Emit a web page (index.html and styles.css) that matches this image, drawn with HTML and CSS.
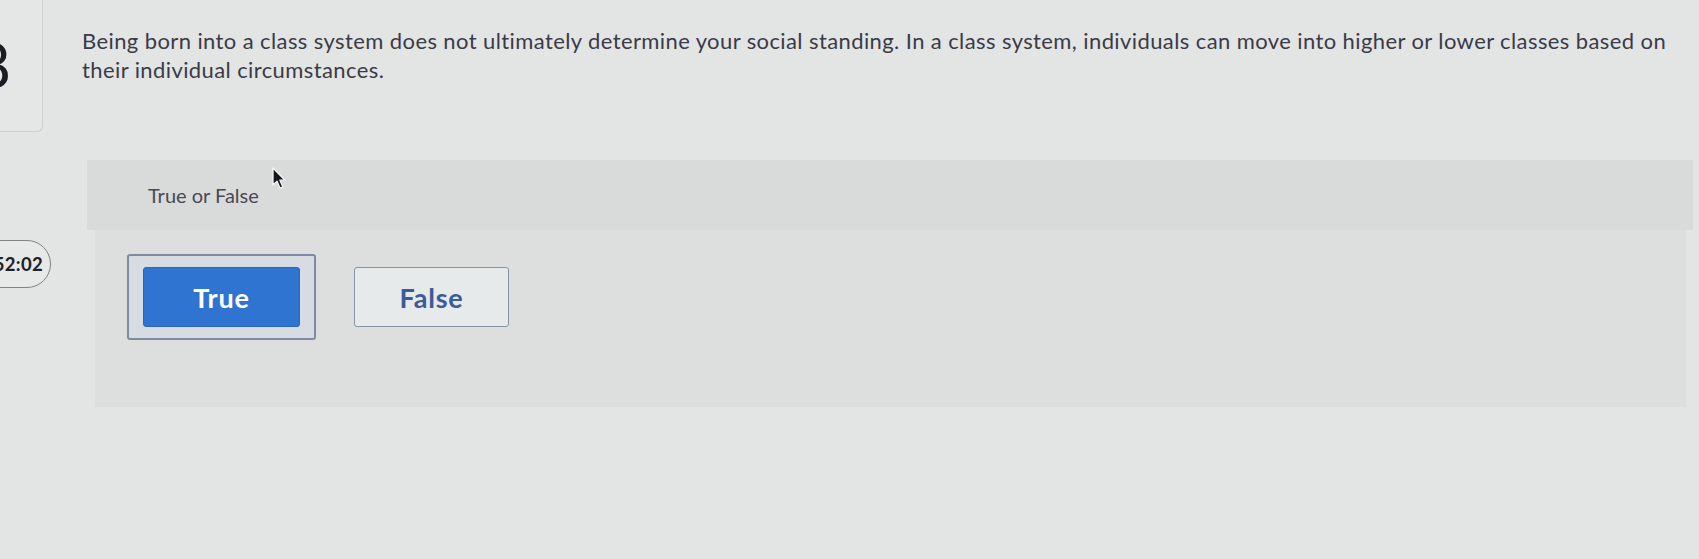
FILE: index.html
```html
<!DOCTYPE html>
<html lang="en">
<head>
<meta charset="utf-8">
<title>True or False</title>
<link rel="stylesheet" href="styles.css">
</head>
<body>
<div class="page">
  <aside class="rail">
    <div class="num-card"><span class="num">8</span></div>
    <div class="timer">52:02</div>
  </aside>
  <main class="main">
    <p class="prompt">Being born into a class system does not ultimately determine your social standing. In a class system, individuals can move into higher or lower classes based on<br>their individual circumstances.</p>
    <section class="panel">
      <div class="panel-head">True or False</div>
      <div class="panel-body">
        <div class="choice-frame"><button class="choice choice-selected">True</button></div>
        <button class="choice">False</button>
      </div>
    </section>
  </main>
  <svg class="cursor" width="16" height="24" viewBox="0 0 16 24" aria-hidden="true">
    <path d="M1 1 L1 18 L5 14.2 L8 21 L10.8 19.8 L7.9 13.2 L13 13.2 Z" fill="#16161c" stroke="#f4f6f6" stroke-width="1.3" stroke-linejoin="round"/>
  </svg>
</div>
</body>
</html>
```

FILE: styles.css
```css
* { box-sizing: border-box; }

html, body {
  margin: 0;
  padding: 0;
}

body {
  width: 1699px;
  height: 559px;
  overflow: hidden;
  background: #e2e5e4;
  font-family: Lato, "Open Sans", "Liberation Sans", sans-serif;
  color: #3b3a47;
}

.page {
  position: relative;
  display: flex;
  width: 1699px;
  height: 559px;
}

.rail {
  width: 52px;
  flex: none;
  display: flex;
  flex-direction: column;
}

.num-card {
  width: 60px;
  height: 132px;
  margin-left: -17px;
  padding-top: 33px;
  border: 1px solid #cdd0cf;
  border-top: none;
  border-radius: 0 0 6px 6px;
  overflow: hidden;
  background: #e4e7e6;
}

.num {
  display: block;
  margin-left: -9px;
  font-size: 62px;
  line-height: 1;
  font-weight: 400;
  color: #1c1c22;
}

.timer {
  width: 74px;
  height: 48px;
  margin-top: 108px;
  margin-left: -23px;
  padding-right: 7px;
  border: 1.5px solid #7f8382;
  border-radius: 24px;
  background: #e6e9e8;
  display: flex;
  align-items: center;
  justify-content: flex-end;
  font-size: 18.5px;
  font-weight: 700;
  letter-spacing: 0.3px;
  color: #202026;
}

.main {
  flex: 1;
  padding-left: 30px;
  display: flex;
  flex-direction: column;
}

.prompt {
  margin: 26px 0 0 0;
  font-size: 22px;
  line-height: 29px;
  letter-spacing: 0.4px;
  white-space: nowrap;
  color: #3b3a47;
}

.panel {
  margin: 76px 6px 0 5px;
  display: flex;
  flex-direction: column;
}

.panel-head {
  height: 70px;
  padding-left: 61px;
  display: flex;
  align-items: center;
  background: #d8dbda;
  font-size: 20px;
  color: #4a4953;
}

.panel-body {
  height: 177px;
  margin: 0 7px 0 8px;
  padding: 24px 0 0 32px;
  background: #dcdfde;
  display: flex;
  align-items: flex-start;
  gap: 38px;
}

.choice-frame {
  padding: 11px 14px;
  border: 2px solid #808aa0;
  border-radius: 3px;
  background: #d6dce1;
}

.choice {
  display: flex;
  align-items: center;
  justify-content: center;
  width: 155px;
  height: 60px;
  margin-top: 13px;
  padding: 0;
  border: 1.5px solid #8692a6;
  border-radius: 3px;
  background: #e7eaeb;
  font-family: Lato, "Open Sans", "Liberation Sans", sans-serif;
  font-size: 27px;
  font-weight: 700;
  letter-spacing: 0.8px;
  color: #3d5b96;
}

.choice-selected {
  width: 157px;
  margin-top: 0;
  border: 1px solid #2a67bb;
  background: #2f74d1;
  color: #ffffff;
}

.cursor {
  position: absolute;
  left: 272px;
  top: 167px;
}
```
